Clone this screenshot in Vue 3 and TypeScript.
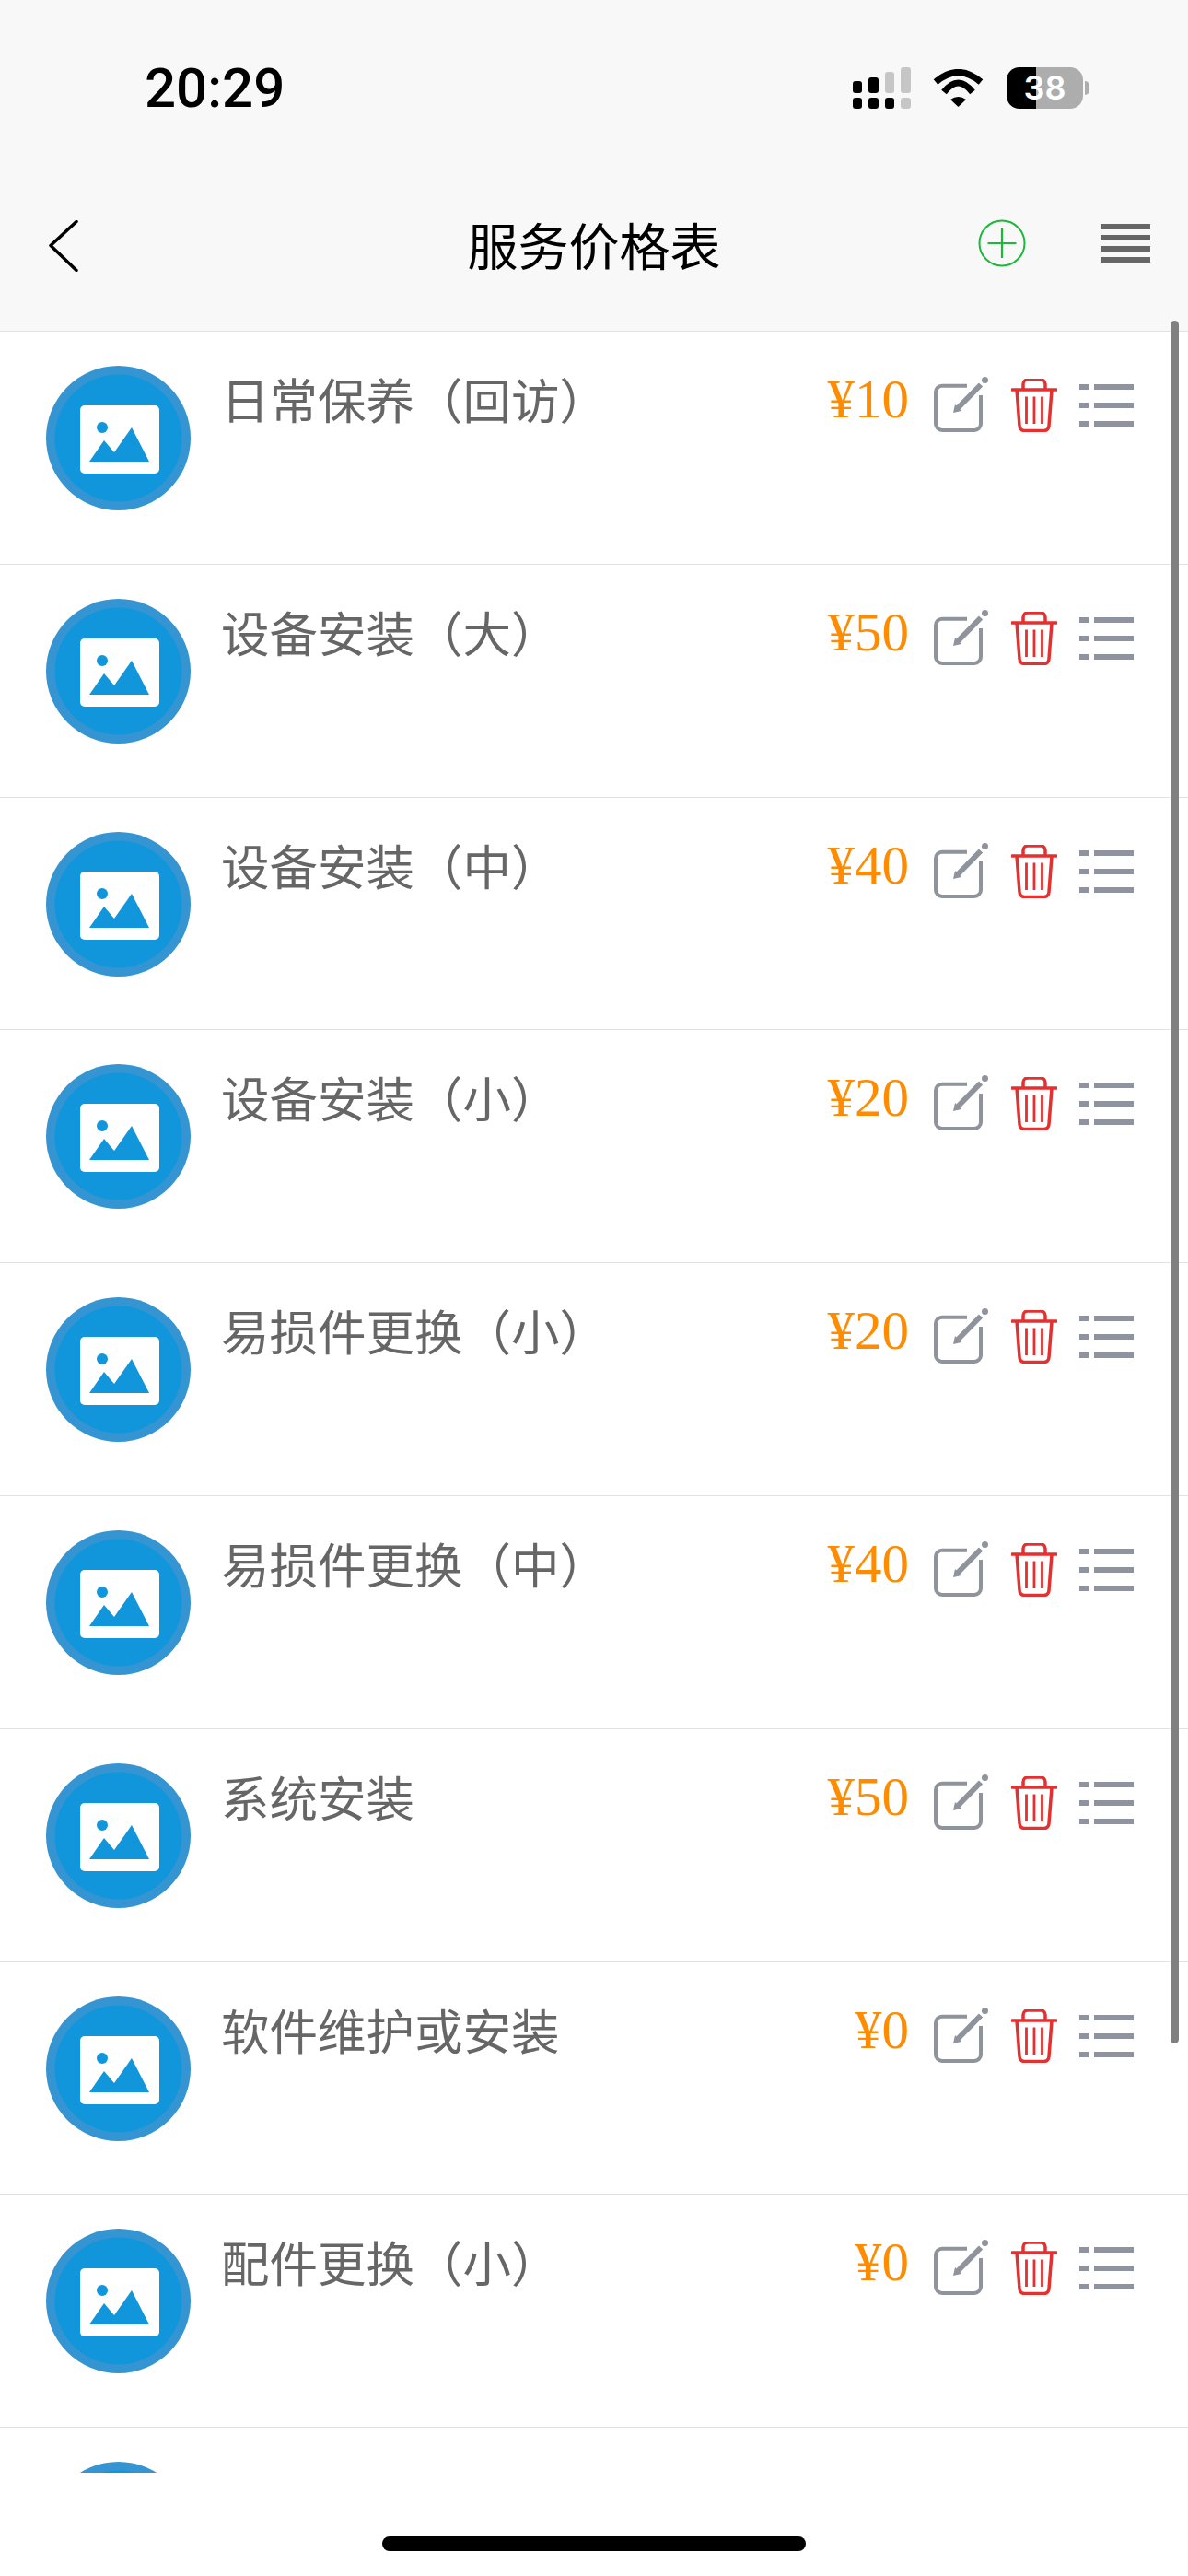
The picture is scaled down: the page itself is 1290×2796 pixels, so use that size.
<script setup lang="ts">
interface PriceItem {
  title: string
  price: number
}

const items: PriceItem[] = [
  { title: '日常保养（回访）', price: 10 },
  { title: '设备安装（大）', price: 50 },
  { title: '设备安装（中）', price: 40 },
  { title: '设备安装（小）', price: 20 },
  { title: '易损件更换（小）', price: 20 },
  { title: '易损件更换（中）', price: 40 },
  { title: '系统安装', price: 50 },
  { title: '软件维护或安装', price: 0 },
  { title: '配件更换（小）', price: 0 },
  { title: '配件更换（中）', price: 0 },
]
</script>

<template>
  <div class="page">
    <header class="header">
      <div class="status">
        <span class="time">20:29</span>
        <div class="status-icons">
          <svg class="signal" width="63" height="45" viewBox="0 0 63 45">
            <rect x="0" y="15" width="10" height="13" rx="3" fill="#000" />
            <rect x="17" y="11" width="11" height="17" rx="3" fill="#000" />
            <rect x="35" y="5" width="10" height="23" rx="3" fill="#c6c6c6" />
            <rect x="52" y="0" width="11" height="28" rx="3" fill="#c6c6c6" />
            <rect x="0" y="33" width="10" height="12" rx="3" fill="#000" />
            <rect x="17" y="33" width="11" height="12" rx="3" fill="#000" />
            <rect x="35" y="33" width="10" height="12" rx="3" fill="#000" />
            <rect x="52" y="33" width="11" height="12" rx="3" fill="#c6c6c6" />
          </svg>
          <svg class="wifi" width="56" height="42" viewBox="0 0 56 42">
            <path d="M3 14Q27.500-7 52 14" fill="none" stroke="#000" stroke-width="7" />
            <path d="M12 25Q27.500 5 43 25" fill="none" stroke="#000" stroke-width="7" />
            <path d="M19 33Q27.500 27 36 33L27.500 41Z" fill="#000" />
          </svg>
          <div class="battery">38</div>
          <span class="battery-nub"></span>
        </div>
      </div>
      <nav class="nav">
        <div class="nav-left">
          <svg width="32" height="56" viewBox="0 0 32 56">
            <path d="M30 1.500L2 27.500L30 54.500" fill="none" stroke="#000" stroke-width="3.500" stroke-linecap="round" stroke-linejoin="round" />
          </svg>
        </div>
        <h1 class="nav-title">服务价格表</h1>
        <div class="nav-right">
          <svg width="52" height="52" viewBox="0 0 52 52">
            <circle cx="26" cy="26" r="24.500" fill="none" stroke="#1cb83a" stroke-width="2" />
            <path d="M26 10V42M10.500 26H41.500" stroke="#1cb83a" stroke-width="2.200" />
          </svg>
          <div class="menu">
            <span></span>
            <span></span>
            <span></span>
            <span></span>
          </div>
        </div>
      </nav>
    </header>

    <main class="list">
      <section v-for="item in items" :key="item.title" class="row">
        <svg class="avatar" width="157" height="157" viewBox="0 0 157 157">
          <circle cx="78.500" cy="78.500" r="78.500" fill="#3495d2" />
          <circle cx="78.500" cy="78.500" r="69" fill="#1296db" />
          <rect x="37" y="43" width="86" height="74" rx="5" fill="#fff" />
          <circle cx="61" cy="67" r="6" fill="#1296db" />
          <path d="M47 104L63 81L74 94L93 67L112 104Z" fill="#1296db" />
        </svg>
        <div class="title">{{ item.title }}</div>
        <div class="price">¥{{ item.price }}</div>
        <div class="actions">
          <svg width="60" height="64" viewBox="0 0 60 64">
            <path d="M36 10.700H9a7 7 0 0 0-7 7V52a7 7 0 0 0 7 7H44a7 7 0 0 0 7-7V21" fill="none" stroke="#8f939b" stroke-width="4" />
            <path d="M26 35L51 9.500" stroke="#8f939b" stroke-width="6" />
            <path d="M21 40L23 31L30 38Z" fill="#8f939b" />
            <circle cx="55.500" cy="4.500" r="3.500" fill="#8f939b" />
          </svg>
          <svg width="50" height="58" viewBox="0 0 50 58">
            <path d="M13 11V6a5 5 0 0 1 5-5h14a5 5 0 0 1 5 5v5" fill="none" stroke="#e53030" stroke-width="3.500" />
            <path d="M1 12H49" stroke="#e53030" stroke-width="3.500" stroke-linecap="round" />
            <path d="M6 12L9 51a5.500 5.500 0 0 0 5.500 5.500h21a5.500 5.500 0 0 0 5.500-5.500L44 12" fill="none" stroke="#e53030" stroke-width="3.500" />
            <path d="M16.500 19.500V49M25 19.500V49M33.500 19.500V49" stroke="#e53030" stroke-width="2.800" />
          </svg>
          <div class="lines">
            <div v-for="n in 3" :key="n" class="line">
              <span class="dash"></span>
              <span class="bar"></span>
            </div>
          </div>
        </div>
      </section>
    </main>

    <footer class="home">
      <span class="pill"></span>
    </footer>

    <div class="scrollbar"></div>
  </div>
</template>

<style scoped>
.page {
  position: relative;
  width: 1290px;
  height: 2796px;
  display: flex;
  flex-direction: column;
  overflow: hidden;
  background: #fff;
  font-family: "Noto Sans CJK SC", "Liberation Sans", sans-serif;
}

.header {
  flex: none;
  height: 360px;
  background: #f8f8f8;
  border-bottom: 1px solid #e2e2e2;
  box-sizing: border-box;
}

.status {
  height: 168px;
  box-sizing: border-box;
  padding: 73px 107px 0 157px;
  display: flex;
  justify-content: space-between;
  align-items: flex-start;
}

.time {
  font-family: Roboto, "Liberation Sans", sans-serif;
  font-size: 60px;
  font-weight: 500;
  line-height: 46px;
  color: #000;
}

.status-icons {
  display: flex;
  align-items: flex-start;
}

.wifi {
  margin: 2px 0 0 24px;
}

.battery {
  width: 83px;
  height: 45px;
  margin-left: 24px;
  border-radius: 14px;
  background: linear-gradient(90deg, #000 0 39%, #adadad 39% 100%);
  color: #fff;
  font-family: Inter, "Liberation Sans", sans-serif;
  font-size: 36px;
  font-weight: 600;
  line-height: 45px;
  text-align: center;
}

.battery-nub {
  width: 5px;
  height: 15px;
  margin: 15px 0 0 2px;
  border-radius: 0 8px 8px 0;
  background: #adadad;
}

.nav {
  height: 191px;
  display: grid;
  grid-template-columns: 1fr auto 1fr;
  align-items: center;
}

.nav-left {
  display: flex;
  padding: 7px 0 0 53px;
}

.nav-title {
  margin: 0;
  font-size: 55px;
  font-weight: 400;
  line-height: 60px;
  color: #000;
}

.nav-right {
  display: flex;
  justify-content: flex-end;
  align-items: center;
  gap: 81px;
  padding-right: 41px;
}

.menu {
  display: flex;
  flex-direction: column;
  gap: 6px;
  width: 54px;
}

.menu span {
  height: 6px;
  background: #666;
}

.list {
  flex: none;
  height: 2324px;
  overflow: hidden;
}

.row {
  height: 252.8px;
  box-sizing: border-box;
  padding: 37px 0 0 50px;
  display: flex;
  align-items: flex-start;
  border-bottom: 1px solid #e2e2e2;
}

.avatar {
  flex: none;
}

.title {
  flex: 1;
  margin: 0 0 0 33px;
  font-size: 52.500px;
  line-height: 70px;
  color: #666;
}

.price {
  margin-top: 3px;
  font-family: "Liberation Serif", serif;
  font-size: 59px;
  line-height: 66px;
  color: #ff8c00;
}

.actions {
  display: flex;
  align-items: flex-start;
  gap: 22px;
  margin: 11px 59px 0 27px;
}

.actions svg:nth-child(2) {
  margin: 3px 0 0 2px;
}

.lines {
  display: flex;
  flex-direction: column;
  gap: 14px;
  width: 59px;
  margin: 9px 0 0 2px;
}

.line {
  display: flex;
  gap: 6px;
  height: 6px;
}

.dash {
  width: 10px;
  background: #8f93a0;
}

.bar {
  flex: 1;
  background: #8f93a0;
}

.home {
  flex: 1;
  display: flex;
  justify-content: center;
  align-items: flex-start;
  padding-top: 69px;
}

.pill {
  width: 460px;
  height: 16px;
  border-radius: 8px;
  background: #000;
}

.scrollbar {
  position: absolute;
  top: 348px;
  left: 1271px;
  width: 9px;
  height: 1870px;
  border-radius: 5px;
  background: #808080;
}
</style>
